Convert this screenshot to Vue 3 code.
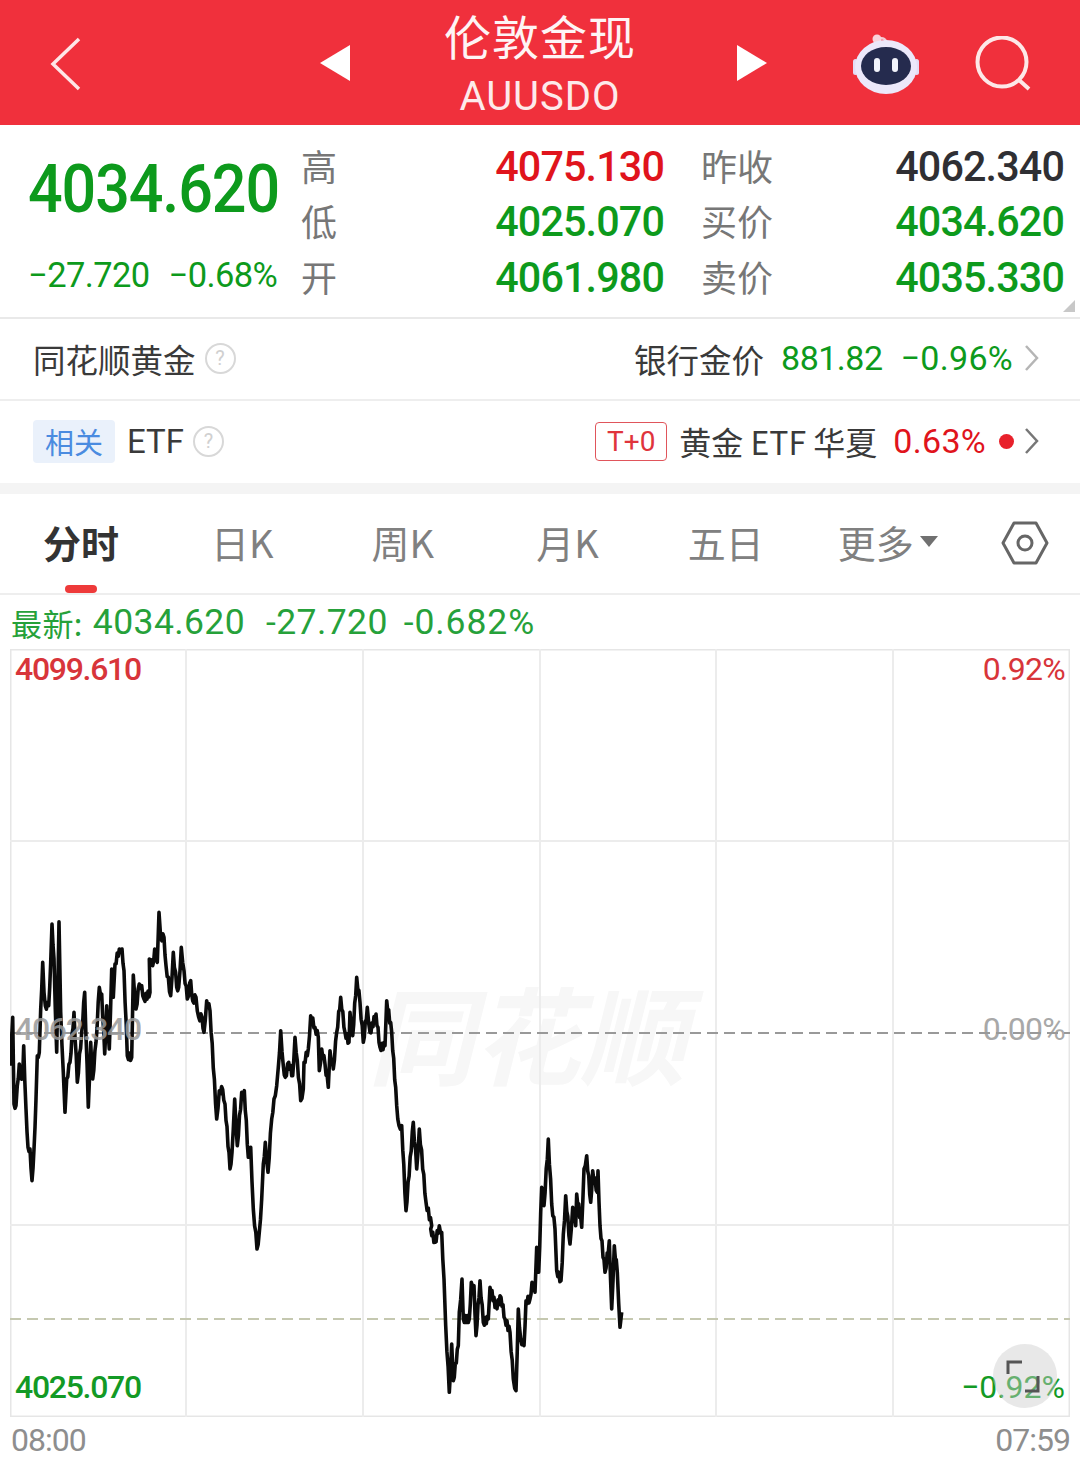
<script setup>
import { computed } from "vue";

// chart trace, in page pixels traced from the crops
const z3 = [[30,500],[38,355],[42,615],[48,620],[52,560],[58,495],[62,530],[68,530],[71,440],[78,630],[84,745],[90,750],[96,845],[102,750],[108,600],[112,470],[118,460],[122,330],[128,190],[132,280],[136,320],[146,320],[152,190],[156,75],[162,180],[170,460],[177,68],[182,340],[190,520],[195,640],[200,540],[210,490],[222,340],[232,550],[245,400],[254,280],[265,625],[272,430],[278,540],[288,430],[298,265],[305,285],[314,465],[320,320],[328,450],[335,210],[340,295],[345,195],[358,150],[366,150],[372,215],[382,470],[395,475],[400,228],[408,330],[418,255],[425,260],[432,300],[450,280],[448,180],[458,200],[464,150],[472,190],[477,40],[482,115],[492,115],[498,200],[512,290],[520,160],[530,265],[536,265],[544,145],[552,215],[562,300],[572,245],[578,305],[588,295],[596,355],[606,355],[612,400],[620,305],[630,335],[650,660],[658,575],[668,572],[675,615],[690,810],[696,760],[704,600],[712,740],[725,580],[733,575],[745,775],[752,745],[760,930],[771,1050],[778,1000],[785,900],[790,795],[796,730],[804,820],[815,660],[822,600],[830,560],[835,505],[842,395],[850,500],[856,535],[866,490],[878,530],[885,415],[892,485],[902,605],[910,570],[912,490],[925,450],[932,350],[945,385],[955,415],[958,515],[965,450],[975,495],[985,565],[990,455],[1000,510],[1010,400],[1022,295],[1035,400],[1047,430],[1050,340],[1058,410],[1070,235],[1080,310],[1090,430],[1102,325],[1110,400],[1128,345],[1140,445],[1155,440],[1160,305],[1175,400],[1190,620],[1197,680]];
const z4 = [[155,500],[168,755],[190,490],[200,630],[208,510],[228,730],[245,800]];
const z5 = [[92,330],[105,370],[118,320],[125,340],[132,480],[137,620],[148,820],[155,675],[160,785],[175,680],[178,580],[186,480],[190,600],[208,600],[214,490],[222,500],[228,650],[240,485],[250,610],[265,600],[270,505],[288,565],[303,535],[315,600],[330,640],[340,780],[348,815],[355,570],[362,660],[372,680],[378,545],[390,540],[396,490],[405,520],[410,385],[416,460],[425,205],[432,260],[445,60],[455,255],[465,330],[470,455],[483,485],[497,230],[510,375],[518,265],[527,320],[530,225],[545,325],[552,150],[560,110],[572,250],[578,155],[592,220],[594,155],[600,320],[615,460],[628,365],[635,570],[643,380],[652,460],[660,625],[665,580]];

const line = computed(() => {
  const pts = [
    ...z3.map(p => [p[0] / 3, 900 + p[1] / 3]),
    ...z4.map(p => [350 + p[0] / 3, 960 + p[1] / 3]),
    ...z5.map(p => [400 + p[0] / 3, 1120 + p[1] / 3]),
  ];
  // small zigzag between traced points, the real line is much denser than the trace
  const out = [];
  pts.forEach((p, i) => {
    out.push(p);
    const n = pts[i + 1];
    if (!n) return;
    const steps = Math.floor(Math.abs(n[0] - p[0]));
    for (let s = 1; s < steps; s++) {
      const t = s / steps;
      const off = (s % 2 ? 1 : -1) * 3.5;
      out.push([p[0] + (n[0] - p[0]) * t, p[1] + (n[1] - p[1]) * t + off]);
    }
  });
  // svg starts at the chart's top left corner (10,650)
  return out.map(p => (p[0] - 10).toFixed(1) + "," + (p[1] - 650).toFixed(1)).join(" ");
});

const stats = [
  { k: "高", v: "4075.130", c: "red", k2: "昨收", v2: "4062.340", c2: "dark" },
  { k: "低", v: "4025.070", c: "green", k2: "买价", v2: "4034.620", c2: "green" },
  { k: "开", v: "4061.980", c: "green", k2: "卖价", v2: "4035.330", c2: "green" },
];
const tabs = ["分时", "日K", "周K", "月K", "五日"];
const vlines = [176, 353, 530, 706, 883];
</script>

<template>
  <div class="page">
    <header class="top">
      <svg class="back" width="34" height="56" viewBox="0 0 34 56"><path d="M30 3 L4 28 L30 53" fill="none" stroke="#fff" stroke-opacity=".88" stroke-width="3.5" /></svg>
      <svg class="arr" width="32" height="36" viewBox="0 0 32 36"><path d="M31 0 L1 18 L31 36 Z" fill="#fff" /></svg>
      <div class="title">
        <div class="t1">伦敦金现</div>
        <div class="t2">AUUSDO</div>
      </div>
      <svg class="arr arr-r" width="32" height="36" viewBox="0 0 32 36"><path d="M1 0 L31 18 L1 36 Z" fill="#fff" /></svg>
      <svg class="robot" width="68" height="62" viewBox="0 0 68 62">
        <path d="M26 7 C31 5 35 7 34 13" fill="none" stroke="#f4c9d4" stroke-width="2.5" />
        <circle cx="25" cy="7" r="4.5" fill="#f8d3da" />
        <rect x="62" y="27" width="5" height="16" rx="2.5" fill="#e3dcf5" />
        <rect x="1" y="27" width="5" height="16" rx="2.5" fill="#e3dcf5" />
        <ellipse cx="34" cy="35" rx="31" ry="27" fill="#ece8fa" />
        <ellipse cx="34" cy="34" rx="25" ry="19" fill="#252b4e" />
        <rect x="22" y="26" width="6" height="14" rx="3" fill="#f2f3fb" />
        <rect x="40" y="26" width="6" height="14" rx="3" fill="#f2f3fb" />
      </svg>
      <svg class="search" width="58" height="58" viewBox="0 0 58 58">
        <circle cx="27" cy="26" r="24.5" fill="none" stroke="#fde8e8" stroke-width="4" />
        <path d="M44 44 L54 53" stroke="#fde8e8" stroke-width="4" />
      </svg>
    </header>

    <section class="quote">
      <div class="main">
        <div class="price">4034.620</div>
        <div class="chg"><span>−27.720</span><span>−0.68%</span></div>
      </div>
      <div class="stats">
        <template v-for="s in stats" :key="s.k">
          <span class="lab">{{ s.k }}</span>
          <span class="val" :class="s.c">{{ s.v }}</span>
          <span class="lab lab2">{{ s.k2 }}</span>
          <span class="val" :class="s.c2">{{ s.v2 }}</span>
        </template>
      </div>
      <i class="corner"></i>
    </section>

    <section class="row">
      <div class="lft">
        <span>同花顺黄金</span>
        <span class="q">?</span>
      </div>
      <div class="rgt">
        <span>银行金价</span>
        <span class="num green gap17">881.82</span>
        <span class="num green gap18 wide">−0.96%</span>
        <svg class="chev" width="15" height="28" viewBox="0 0 15 28"><path d="M2 2 L13 14 L2 26" fill="none" stroke="#b5b5b5" stroke-width="2.5" /></svg>
      </div>
    </section>

    <section class="row row2">
      <div class="lft">
        <span class="tag">相关</span>
        <span class="etf">ETF</span>
        <span class="q">?</span>
      </div>
      <div class="rgt">
        <span class="t0">T+0</span>
        <span class="gold">黄金 ETF 华夏</span>
        <span class="num red gap16 wide">0.63%</span>
        <i class="dot"></i>
        <svg class="chev chev2" width="15" height="28" viewBox="0 0 15 28"><path d="M2 2 L13 14 L2 26" fill="none" stroke="#777" stroke-width="2.5" /></svg>
      </div>
    </section>

    <div class="band"></div>

    <nav class="tabs">
      <span v-for="(t, i) in tabs" :key="t" class="tab" :class="{ on: i === 0 }">{{ t }}</span>
      <span class="tab more">更多<i class="caret"></i></span>
      <svg class="hex" width="48" height="44" viewBox="0 0 48 44">
        <path d="M13 2 H35 L46 22 L35 42 H13 L2 22 Z" fill="none" stroke="#666" stroke-width="3" stroke-linejoin="round" />
        <circle cx="24" cy="22" r="7" fill="none" stroke="#666" stroke-width="3" />
      </svg>
      <i class="mark"></i>
    </nav>

    <div class="latest">
      <span class="lt">最新:</span>
      <span>4034.620</span>
      <span>-27.720</span>
      <span class="last">-0.682%</span>
    </div>

    <div class="chart">
      <div class="wm">同花顺</div>
      <svg class="plot" width="1060" height="768" viewBox="0 0 1060 768">
        <rect x="0.5" y="0.5" width="1059" height="767" fill="none" stroke="#e6e6e6" stroke-width="2" />
        <line v-for="x in vlines" :key="x" :x1="x" :x2="x" y1="0" y2="768" stroke="#ececec" stroke-width="2" />
        <line x1="0" x2="1060" y1="192" y2="192" stroke="#ececec" stroke-width="2" />
        <line x1="0" x2="1060" y1="576" y2="576" stroke="#ececec" stroke-width="2" />
        <line x1="0" x2="1060" y1="384" y2="384" stroke="#999" stroke-width="2" stroke-dasharray="11 6" />
        <line x1="0" x2="1060" y1="670" y2="670" stroke="#c5c8b0" stroke-width="2" stroke-dasharray="11 6" />
        <polyline :points="line" fill="none" stroke="#0b0b0b" stroke-width="3.6" stroke-linejoin="round" />
      </svg>
      <span class="lb tl red">4099.610</span>
      <span class="lb tr red">0.92%</span>
      <span class="lb ml gray">4062.340</span>
      <span class="lb mr gray">0.00%</span>
      <span class="lb bl green2">4025.070</span>
      <span class="lb br green2">−0.92%</span>
      <div class="expand">
        <svg width="64" height="64" viewBox="0 0 64 64">
          <path d="M15 30 V18 H29" fill="none" stroke="#555" stroke-width="3" />
          <path d="M45 32 V47 H32" fill="none" stroke="#555" stroke-width="3" />
        </svg>
      </div>
    </div>

    <div class="axis">
      <span>08:00</span>
      <span>07:59</span>
    </div>
  </div>
</template>

<style>
html, body { background: #fff; }
</style>

<style scoped>
.page {
  width: 1080px;
  height: 1475px;
  overflow: hidden;
  background: #fff;
  font-family: "Noto Sans CJK SC", "Noto Sans", sans-serif;
  color: #333;
}
i { display: block; }
.red { color: #e0141c; }
.green { color: #0d9a1c; }
.dark { color: #2f2f33; }

.top {
  height: 125px;
  background: #f0303c;
  display: flex;
  align-items: center;
  position: relative;
}
.back { margin: 2px 0 0 49px; }
.arr { margin: 0 0 0 236px; }
.title { width: 378px; margin-top: -2px; text-align: center; color: #fff; }
.t1 { font-size: 47px; line-height: 60px; opacity: .95; letter-spacing: 1px; }
.t2 { font-family: Roboto, sans-serif; font-size: 40px; line-height: 44px; margin-top: 10px; opacity: .9; letter-spacing: 1px; }
.arr-r { margin: 0 0 0 7px; }
.robot { margin: 0 0 0 84px; }
.search { margin: 4px 0 0 55px; }

.quote {
  height: 194px;
  position: relative;
  display: flex;
  border-bottom: 2px solid #e9e9e9;
  box-sizing: border-box;
}
.main { width: 301px; padding: 30px 0 0 28px; box-sizing: border-box; color: #0d9a1c; font-family: Roboto, sans-serif; }
.price { font-size: 66px; line-height: 70px; font-weight: 500; letter-spacing: -1.2px; transform: scaleX(.925); transform-origin: left center; white-space: nowrap; }
.chg { display: flex; gap: 19px; margin-top: 30px; font-size: 34.5px; line-height: 40px; letter-spacing: -.6px; width: 250px; white-space: nowrap; }
.stats {
  display: grid;
  grid-template-columns: 163px 200px 112px 288px;
  grid-auto-rows: 55.5px;
  padding-top: 12px;
  align-items: center;
}
.lab { font-size: 36px; color: #777; line-height: 50px; white-space: nowrap; }
.lab2 { margin-left: 37px; }
.val {
  font-family: Roboto, sans-serif;
  font-size: 43px;
  font-weight: 500;
  letter-spacing: -.9px;
  text-align: right;
  line-height: 50px;
  margin-top: 2px;
  transform: scaleX(.96);
  transform-origin: right center;
}
.corner {
  position: absolute;
  right: 5px;
  bottom: 5px;
  width: 0;
  height: 0;
  border-left: 12px solid transparent;
  border-bottom: 12px solid #c8c8c8;
}

.row {
  height: 82px;
  display: flex;
  justify-content: space-between;
  align-items: center;
  padding: 0 41px 0 33px;
  border-bottom: 2px solid #eeeeee;
  box-sizing: border-box;
  font-size: 32.5px;
  color: #3a3a3a;
}
.row2 { border-bottom: 0; }
.lft, .rgt { display: flex; align-items: center; margin-top: -2px; }
.q {
  width: 27px;
  height: 27px;
  margin-left: 9px;
  border: 2px solid #d8d8d8;
  border-radius: 50%;
  color: #d0d0d0;
  font: 20px/27px Roboto, sans-serif;
  text-align: center;
}
.num { font-family: Roboto, sans-serif; font-size: 34px; letter-spacing: -.5px; }
.wide { letter-spacing: .3px; }
.gap16 { margin-left: 16px; }
.gap17 { margin-left: 17px; }
.gap18 { margin-left: 18px; }
.chev { margin-left: 11px; }
.tag {
  width: 82px;
  height: 43px;
  background: #eaf1fb;
  color: #4a8be0;
  font-size: 29px;
  line-height: 42px;
  text-align: center;
  border-radius: 4px;
}
.etf { margin-left: 12px; font-family: Roboto, sans-serif; font-size: 33px; }
.t0 {
  width: 72px;
  height: 39px;
  box-sizing: border-box;
  border: 1px solid #e0555b;
  border-radius: 4px;
  color: #e0343c;
  font: 28px/37px Roboto, sans-serif;
  text-align: center;
}
.gold { margin-left: 12px; font-size: 32px; }
.dot { width: 15px; height: 15px; border-radius: 50%; background: #e8212b; margin-left: 13px; }
.chev2 { margin-left: 10px; }
.band { height: 11px; background: #f4f4f4; }

.tabs {
  height: 101px;
  position: relative;
  display: flex;
  align-items: center;
  padding-left: 43px;
  gap: 96px;
  border-bottom: 2px solid #eeeeee;
  box-sizing: border-box;
  font-size: 38px;
  color: #808080;
}
.tab { line-height: 50px; white-space: nowrap; margin-top: -4px; }
.tab:nth-child(2) { margin-left: -4px; }
.tab:nth-child(3) { margin-left: 2px; }
.tab:nth-child(4) { margin-left: 6px; }
.tab:nth-child(5) { margin-left: -7px; }
.on { color: #333; font-weight: 700; }
.more { display: flex; align-items: center; margin-left: -22px; }
.caret {
  width: 0;
  height: 0;
  margin: 0 0 0 6px;
  border-left: 9px solid transparent;
  border-right: 9px solid transparent;
  border-top: 11px solid #707070;
}
.hex { position: absolute; left: 1001px; top: 27px; }
.mark {
  position: absolute;
  left: 65px;
  bottom: 0;
  width: 32px;
  height: 8px;
  border-radius: 4px;
  background: #ee3a3a;
}

.latest {
  height: 54px;
  display: flex;
  align-items: center;
  padding-left: 11px;
  gap: 21px;
  font-family: Roboto, sans-serif;
  font-size: 35.5px;
  color: #26a13a;
  letter-spacing: .4px;
}
.lt { font-family: "Noto Sans CJK SC", sans-serif; font-size: 31px; margin-right: -11px; }
.last { margin-left: -5px; letter-spacing: .9px; }

.chart {
  position: relative;
  width: 1060px;
  height: 768px;
  margin-left: 10px;
}
.plot { position: absolute; left: 0; top: 0; }
.wm {
  position: absolute;
  left: 358px;
  top: 322px;
  font-size: 106px;
  line-height: 120px;
  font-weight: 700;
  color: #f7f7f7;
  font-style: italic;
  white-space: nowrap;
}
.lb {
  position: absolute;
  font-family: Roboto, sans-serif;
  font-size: 32px;
  line-height: 38px;
  font-weight: 500;
  letter-spacing: -1.3px;
}
.tl { left: 5px; top: 1px; }
.tr { right: 5px; top: 1px; font-weight: 400; letter-spacing: -.7px; }
.tl.red, .tr.red { color: #d8353a; }
.ml { left: 5px; top: 361px; }
.mr { right: 5px; top: 361px; font-weight: 400; letter-spacing: -.7px; }
.gray { color: #9a9a9a; opacity: .85; }
.bl { left: 5px; top: 719px; }
.br { right: 5px; top: 719px; font-weight: 400; letter-spacing: 0; }
.green2 { color: #139a25; }
.expand {
  position: absolute;
  left: 983px;
  top: 695px;
  width: 64px;
  height: 64px;
  border-radius: 50%;
  background: rgba(205, 205, 205, .45);
}
.axis {
  display: flex;
  justify-content: space-between;
  width: 1059px;
  margin: 3px 0 0 11px;
  font-family: Roboto, sans-serif;
  font-size: 32px;
  line-height: 40px;
  letter-spacing: -1px;
  color: #8e8e8e;
}
</style>
